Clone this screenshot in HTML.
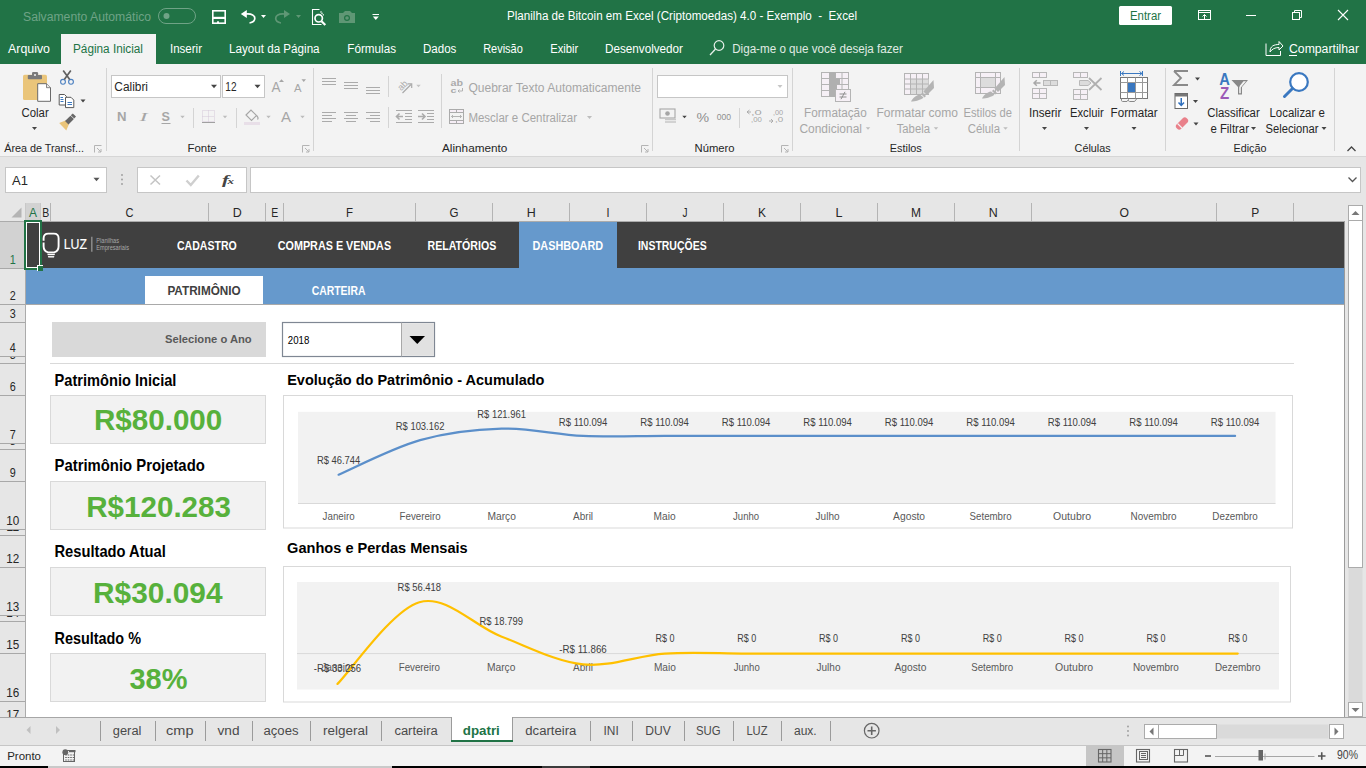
<!DOCTYPE html>
<html><head><meta charset="utf-8"><title>Excel</title>
<style>html,body{margin:0;padding:0;width:1366px;height:768px;overflow:hidden;background:#fff}
svg{display:block;font-family:"Liberation Sans",sans-serif}</style></head>
<body><svg width="1366" height="768" viewBox="0 0 1366 768">
<rect x="0" y="0" width="1366" height="64" fill="#217346" />
<text x="23.0" y="20.9" font-size="12.50" fill="#6fa386" textLength="128.0" lengthAdjust="spacingAndGlyphs" >Salvamento Automático</text>
<rect x="158.5" y="8.5" width="37" height="15" fill="none" stroke="#6fa386" stroke-width="1" rx="7.5"/>
<circle cx="166.5" cy="16" r="3" fill="#6fa386"/>
<rect x="212.8" y="10.8" width="12.4" height="12.4" fill="none" stroke="#fff" stroke-width="1.6" />
<rect x="212" y="16.8" width="14" height="2.2" fill="#fff" />
<rect x="217" y="21.3" width="2" height="2" fill="#fff" />
<path d="M246,14 C252,13.5 254.8,15.5 254.8,18.3 C254.8,21 253,22.5 249.5,23" fill="none" stroke="#fff" stroke-width="1.7" />
<path d="M240.8,14 L246.8,10.1 V17.9 Z" fill="#fff" />
<path d="M261.0,15.0 L266.0,15.0 L263.5,18.0 Z" fill="#fff" />
<path d="M284.5,14 C278.5,13.5 275.7,15.5 275.7,18.3 C275.7,21 277.5,22.5 281,23" fill="none" stroke="#5f9775" stroke-width="1.7" />
<path d="M290,14 L284,10.1 V17.9 Z" fill="#5f9775" />
<path d="M296.0,15.0 L301.0,15.0 L298.5,18.0 Z" fill="#5f9775" />
<path d="M321.5,24.5 H312.5 V9.5 H319.5" fill="none" stroke="#fff" stroke-width="1.1" />
<path d="M320.5,11 L322,12.5 M320.5,12.5 L323.5,14.5 V15.5" fill="none" stroke="#fff" stroke-width="0.9" />
<circle cx="318.7" cy="18.3" r="3.7" fill="none" stroke="#fff" stroke-width="1.7"/>
<line x1="321.5" y1="21.2" x2="325.3" y2="25" stroke="#fff" stroke-width="2.2" />
<path d="M339,13 H343 L345,11 H350 L352,13 H355 V23 H339 Z" fill="#5f9775" />
<circle cx="347" cy="18" r="3" fill="#217346"/><circle cx="347" cy="18" r="1.8" fill="#5f9775"/>
<line x1="372.5" y1="14.5" x2="379" y2="14.5" stroke="#fff" stroke-width="1" />
<path d="M372.8,16.55 L378.8,16.55 L375.8,20.05 Z" fill="#fff" />
<text x="507.0" y="19.6" font-size="12.50" fill="#fff" textLength="350.0" lengthAdjust="spacingAndGlyphs" >Planilha de Bitcoin em Excel (Criptomoedas) 4.0 - Exemplo  -  Excel</text>
<rect x="1119" y="6" width="53" height="19" fill="#fff" rx="1.5"/>
<text x="1130.0" y="19.5" font-size="12.21" fill="#217346" textLength="31.0" lengthAdjust="spacingAndGlyphs" >Entrar</text>
<rect x="1198.5" y="10.5" width="12" height="9" fill="none" stroke="#fff" stroke-width="1" />
<line x1="1198.5" y1="12.5" x2="1210.5" y2="12.5" stroke="#fff" stroke-width="1" />
<path d="M1204.5,19 V14.5 M1202.5,16.5 L1204.5,14.5 L1206.5,16.5" fill="none" stroke="#fff" stroke-width="1" />
<line x1="1246" y1="15.5" x2="1256" y2="15.5" stroke="#fff" stroke-width="1" />
<rect x="1292.5" y="12.5" width="7" height="7" fill="none" stroke="#fff" stroke-width="1" />
<path d="M1294.5,12.5 V10.5 H1301.5 V17.5 H1299.5" fill="none" stroke="#fff" stroke-width="1" />
<path d="M1338,10 L1348,20 M1348,10 L1338,20" fill="none" stroke="#fff" stroke-width="1.1" />
<rect x="61" y="34" width="95" height="30" fill="#f3f3f3" />
<text x="8.0" y="52.9" font-size="12.65" fill="#fff" textLength="42.0" lengthAdjust="spacingAndGlyphs" >Arquivo</text>
<text x="73.0" y="52.9" font-size="12.65" fill="#217346" textLength="70.0" lengthAdjust="spacingAndGlyphs" >Página Inicial</text>
<text x="170.0" y="52.9" font-size="12.65" fill="#fff" textLength="32.0" lengthAdjust="spacingAndGlyphs" >Inserir</text>
<text x="229.0" y="52.9" font-size="12.65" fill="#fff" textLength="90.6" lengthAdjust="spacingAndGlyphs" >Layout da Página</text>
<text x="347.3" y="52.9" font-size="12.65" fill="#fff" textLength="48.7" lengthAdjust="spacingAndGlyphs" >Fórmulas</text>
<text x="423.0" y="52.9" font-size="12.65" fill="#fff" textLength="33.4" lengthAdjust="spacingAndGlyphs" >Dados</text>
<text x="483.2" y="52.9" font-size="12.65" fill="#fff" textLength="39.6" lengthAdjust="spacingAndGlyphs" >Revisão</text>
<text x="550.2" y="52.9" font-size="12.65" fill="#fff" textLength="28.0" lengthAdjust="spacingAndGlyphs" >Exibir</text>
<text x="605.0" y="52.9" font-size="12.65" fill="#fff" textLength="78.0" lengthAdjust="spacingAndGlyphs" >Desenvolvedor</text>
<circle cx="719" cy="45.5" r="4.8" fill="none" stroke="#e6efe9" stroke-width="1.2"/>
<line x1="715.5" y1="49" x2="710" y2="55" stroke="#e6efe9" stroke-width="1.3" />
<text x="732.2" y="52.9" font-size="12.65" fill="#e0ebe4" textLength="170.7" lengthAdjust="spacingAndGlyphs" >Diga-me o que você deseja fazer</text>
<path d="M1266,43.5 V55.5 H1280.5 V51" fill="none" stroke="#fff" stroke-width="1" />
<path d="M1270,52 C1270,46 1274,44.5 1279,44.5 V41.5 L1283,46 L1279,50 V47.5 C1275,47.5 1272,49 1270,52 Z" fill="none" stroke="#fff" stroke-width="1" />
<text x="1289.0" y="52.9" font-size="12.65" fill="#fff" textLength="70.0" lengthAdjust="spacingAndGlyphs" >Compartilhar</text>
<line x1="1289" y1="55.5" x2="1297" y2="55.5" stroke="#fff" stroke-width="1" />
<rect x="0" y="64" width="1366" height="92" fill="#f3f3f3" />
<line x1="0" y1="156.5" x2="1366" y2="156.5" stroke="#d6d6d6" stroke-width="1" />
<text x="4.2" y="152.0" font-size="11.63" fill="#262626" textLength="79.7" lengthAdjust="spacingAndGlyphs" >Área de Transf...</text>
<text x="187.4" y="152.0" font-size="11.63" fill="#262626" textLength="29.3" lengthAdjust="spacingAndGlyphs" >Fonte</text>
<text x="442.0" y="152.0" font-size="11.63" fill="#262626" textLength="65.4" lengthAdjust="spacingAndGlyphs" >Alinhamento</text>
<text x="694.5" y="152.0" font-size="11.63" fill="#262626" textLength="40.1" lengthAdjust="spacingAndGlyphs" >Número</text>
<text x="889.8" y="152.0" font-size="11.63" fill="#262626" textLength="32.0" lengthAdjust="spacingAndGlyphs" >Estilos</text>
<text x="1074.6" y="152.0" font-size="11.63" fill="#262626" textLength="36.0" lengthAdjust="spacingAndGlyphs" >Células</text>
<text x="1233.5" y="152.0" font-size="11.63" fill="#262626" textLength="32.9" lengthAdjust="spacingAndGlyphs" >Edição</text>
<line x1="106.5" y1="68" x2="106.5" y2="151" stroke="#d4d4d4" stroke-width="1" />
<line x1="313.5" y1="68" x2="313.5" y2="151" stroke="#d4d4d4" stroke-width="1" />
<line x1="652.5" y1="68" x2="652.5" y2="151" stroke="#d4d4d4" stroke-width="1" />
<line x1="792.5" y1="68" x2="792.5" y2="151" stroke="#d4d4d4" stroke-width="1" />
<line x1="1019.5" y1="68" x2="1019.5" y2="151" stroke="#d4d4d4" stroke-width="1" />
<line x1="1165.5" y1="68" x2="1165.5" y2="151" stroke="#d4d4d4" stroke-width="1" />
<line x1="1334.5" y1="68" x2="1334.5" y2="151" stroke="#d4d4d4" stroke-width="1" />
<path d="M94.5,152.5 V145.5 H101.5" fill="none" stroke="#b4b4b4" stroke-width="1" />
<path d="M97.0,148.0 L101.0,152.0 M101.0,149.0 V152.0 H98.0" fill="none" stroke="#b4b4b4" stroke-width="1" />
<path d="M302.5,152.5 V145.5 H309.5" fill="none" stroke="#b4b4b4" stroke-width="1" />
<path d="M305.0,148.0 L309.0,152.0 M309.0,149.0 V152.0 H306.0" fill="none" stroke="#b4b4b4" stroke-width="1" />
<path d="M641.5,152.5 V145.5 H648.5" fill="none" stroke="#b4b4b4" stroke-width="1" />
<path d="M644.0,148.0 L648.0,152.0 M648.0,149.0 V152.0 H645.0" fill="none" stroke="#b4b4b4" stroke-width="1" />
<path d="M781.5,152.5 V145.5 H788.5" fill="none" stroke="#b4b4b4" stroke-width="1" />
<path d="M784.0,148.0 L788.0,152.0 M788.0,149.0 V152.0 H785.0" fill="none" stroke="#b4b4b4" stroke-width="1" />
<path d="M1347.5,151 L1351.5,147 L1355.5,151" fill="none" stroke="#444" stroke-width="1.3" />
<rect x="23" y="74.8" width="24" height="25.3" fill="#eac57a" rx="1.6"/>
<rect x="27.8" y="75" width="14.2" height="4.2" fill="#7a7a7a" rx="0.8"/>
<rect x="32" y="72" width="6.1" height="3.5" fill="#7a7a7a" rx="1.2"/>
<circle cx="35" cy="75" r="1" fill="#f3f3f3"/>
<path d="M37.7,83.7 H46.5 L50.5,87.7 V101.3 H37.7 Z" fill="#fff" stroke="#6a6a6a" stroke-width="1" />
<path d="M46.5,83.7 V87.7 H50.5" fill="#e8e8e8" stroke="#6a6a6a" stroke-width="0.8" />
<text x="21.5" y="117.2" font-size="12.50" fill="#262626" textLength="27.2" lengthAdjust="spacingAndGlyphs" >Colar</text>
<path d="M32.0,127.0 L37.0,127.0 L34.5,130.0 Z" fill="#444" />
<circle cx="63" cy="81.8" r="2.4" fill="none" stroke="#4a7fc0" stroke-width="1.1"/>
<circle cx="71" cy="81.8" r="2.4" fill="none" stroke="#4a7fc0" stroke-width="1.1"/>
<path d="M64.3,79.6 L70.8,70.6 M69.7,79.6 L63.2,70.6" fill="none" stroke="#606060" stroke-width="1.7" />
<path d="M59.2,94.5 H64.5 L66.5,96.5 V105 H59.2 Z" fill="#fff" stroke="#5a5a5a" stroke-width="1" />
<path d="M65.5,97.3 H71 L73.8,100.1 V107.6 H65.5 Z" fill="#fff" stroke="#5a5a5a" stroke-width="1" />
<path d="M60.5,97.5 H63 M60.5,99.5 H63.5 M60.5,101.5 H63.5 M67.5,102.5 H72 M67.5,104.5 H72" fill="none" stroke="#3a78c0" stroke-width="1" />
<path d="M80.5,99.5 L85.5,99.5 L83,102.5 Z" fill="#444" />
<path d="M59.2,123 L65.5,120.5 L69,124 L66.3,130.5 Z" fill="#eac57a" />
<path d="M65,121 L70.5,115.7 L73.9,119 L68.5,124.5 Z" fill="#666" />
<path d="M70.8,115.2 L72.8,113.4 L76,116.6 L74.2,118.6 Z" fill="#666" />
<rect x="111.5" y="75.5" width="109" height="22" fill="#fff" stroke="#c6c6c6" stroke-width="1" />
<rect x="222.5" y="75.5" width="42" height="22" fill="#fff" stroke="#c6c6c6" stroke-width="1" />
<text x="114.3" y="90.5" font-size="12.50" fill="#262626" textLength="33.7" lengthAdjust="spacingAndGlyphs" >Calibri</text>
<text x="225.3" y="90.5" font-size="12.50" fill="#262626" textLength="11.2" lengthAdjust="spacingAndGlyphs" >12</text>
<path d="M211.0,84.75 L217.0,84.75 L214,88.25 Z" fill="#444" />
<path d="M254.5,84.75 L260.5,84.75 L257.5,88.25 Z" fill="#444" />
<text x="271.5" y="91.6" font-size="14.53" fill="#a6a6a6" textLength="9.0" lengthAdjust="spacingAndGlyphs" >A</text>
<path d="M279,82 L281.5,79.2 L284,82 Z" fill="#a6a6a6" />
<text x="294.0" y="91.6" font-size="10.76" fill="#a6a6a6" textLength="7.5" lengthAdjust="spacingAndGlyphs" >A</text>
<path d="M301.5,79.2 H306 L303.75,82 Z" fill="#a6a6a6" />
<text x="117.0" y="121.0" font-size="12.50" font-weight="bold" fill="#a6a6a6" textLength="9.5" lengthAdjust="spacingAndGlyphs" >N</text>
<text x="139.5" y="121.0" font-size="12.50" fill="#a6a6a6" textLength="8.0" lengthAdjust="spacingAndGlyphs" font-style="italic" font-family="Liberation Serif">I</text>
<text x="161.6" y="121.0" font-size="12.50" font-weight="bold" fill="#a6a6a6" textLength="8.4" lengthAdjust="spacingAndGlyphs" >S</text>
<line x1="161.5" y1="123.5" x2="170.5" y2="123.5" stroke="#a6a6a6" stroke-width="1" />
<path d="M180.25,115.75 L184.75,115.75 L182.5,118.25 Z" fill="#bdbdbd" />
<line x1="193.5" y1="108" x2="193.5" y2="128" stroke="#d4d4d4" stroke-width="1" />
<rect x="202.5" y="110.5" width="12" height="11" fill="none" stroke="#d4c8d8" stroke-width="1" stroke-dasharray="1,1"/>
<line x1="202.5" y1="116.5" x2="214.5" y2="116.5" stroke="#d4c8d8" stroke-width="1" stroke-dasharray="1,1"/>
<line x1="208.5" y1="110.5" x2="208.5" y2="121.5" stroke="#d4c8d8" stroke-width="1" stroke-dasharray="1,1"/>
<line x1="202" y1="122.5" x2="215" y2="122.5" stroke="#a0a0a0" stroke-width="1" />
<path d="M222.75,115.75 L227.25,115.75 L225,118.25 Z" fill="#bdbdbd" />
<line x1="236.5" y1="108" x2="236.5" y2="128" stroke="#d4d4d4" stroke-width="1" />
<path d="M246,115 L251,110 L256.5,115.5 L251.5,120.5 Z" fill="none" stroke="#a6a6a6" stroke-width="1.1" />
<path d="M256.5,115.5 C258,117 258.5,118.5 257.5,119.5" fill="none" stroke="#a6a6a6" stroke-width="1.2" />
<rect x="244" y="122" width="16" height="3" fill="#e8dfe8" />
<path d="M266.25,115.75 L270.75,115.75 L268.5,118.25 Z" fill="#bdbdbd" />
<text x="281.0" y="122.0" font-size="14.24" fill="#a6a6a6" textLength="10.0" lengthAdjust="spacingAndGlyphs" >A</text>
<path d="M300.25,115.75 L304.75,115.75 L302.5,118.25 Z" fill="#bdbdbd" />
<line x1="322" y1="78.5" x2="336" y2="78.5" stroke="#ababab" stroke-width="1" />
<line x1="322" y1="81.5" x2="336" y2="81.5" stroke="#ababab" stroke-width="1" />
<line x1="322" y1="84.5" x2="336" y2="84.5" stroke="#ababab" stroke-width="1" />
<line x1="344" y1="82.5" x2="358" y2="82.5" stroke="#ababab" stroke-width="1" />
<line x1="344" y1="85.5" x2="358" y2="85.5" stroke="#ababab" stroke-width="1" />
<line x1="344" y1="88.5" x2="358" y2="88.5" stroke="#ababab" stroke-width="1" />
<line x1="366" y1="87.5" x2="380" y2="87.5" stroke="#ababab" stroke-width="1" />
<line x1="366" y1="90.5" x2="380" y2="90.5" stroke="#ababab" stroke-width="1" />
<line x1="366" y1="93.5" x2="380" y2="93.5" stroke="#ababab" stroke-width="1" />
<line x1="322" y1="112.5" x2="336" y2="112.5" stroke="#ababab" stroke-width="1" />
<line x1="344" y1="112.5" x2="358" y2="112.5" stroke="#ababab" stroke-width="1" />
<line x1="366" y1="112.5" x2="380" y2="112.5" stroke="#ababab" stroke-width="1" />
<line x1="322" y1="115.5" x2="332" y2="115.5" stroke="#ababab" stroke-width="1" />
<line x1="346" y1="115.5" x2="356" y2="115.5" stroke="#ababab" stroke-width="1" />
<line x1="370" y1="115.5" x2="380" y2="115.5" stroke="#ababab" stroke-width="1" />
<line x1="322" y1="118.5" x2="336" y2="118.5" stroke="#ababab" stroke-width="1" />
<line x1="344" y1="118.5" x2="358" y2="118.5" stroke="#ababab" stroke-width="1" />
<line x1="366" y1="118.5" x2="380" y2="118.5" stroke="#ababab" stroke-width="1" />
<line x1="322" y1="121.5" x2="332" y2="121.5" stroke="#ababab" stroke-width="1" />
<line x1="346" y1="121.5" x2="356" y2="121.5" stroke="#ababab" stroke-width="1" />
<line x1="370" y1="121.5" x2="380" y2="121.5" stroke="#ababab" stroke-width="1" />
<line x1="388.5" y1="76" x2="388.5" y2="97" stroke="#d4d4d4" stroke-width="1" />
<line x1="388.5" y1="107" x2="388.5" y2="128" stroke="#d4d4d4" stroke-width="1" />
<text x="397.0" y="89.0" font-size="9.45" fill="#ababab" textLength="10.0" lengthAdjust="spacingAndGlyphs" transform="rotate(-45 402 85)">ab</text>
<line x1="402.5" y1="93" x2="411" y2="84.5" stroke="#ababab" stroke-width="1.2" />
<path d="M407.5,83.8 H411.7 V88" fill="none" stroke="#ababab" stroke-width="1.2" />
<path d="M416.25,84.75 L420.75,84.75 L418.5,87.25 Z" fill="#c4c4c4" />
<line x1="396" y1="110.5" x2="412" y2="110.5" stroke="#ababab" stroke-width="1" />
<line x1="396" y1="122.5" x2="412" y2="122.5" stroke="#ababab" stroke-width="1" />
<line x1="405" y1="113.5" x2="412" y2="113.5" stroke="#ababab" stroke-width="1" />
<line x1="405" y1="116.5" x2="412" y2="116.5" stroke="#ababab" stroke-width="1" />
<line x1="405" y1="119.5" x2="412" y2="119.5" stroke="#ababab" stroke-width="1" />
<line x1="418" y1="110.5" x2="434" y2="110.5" stroke="#ababab" stroke-width="1" />
<line x1="418" y1="122.5" x2="434" y2="122.5" stroke="#ababab" stroke-width="1" />
<line x1="427" y1="113.5" x2="434" y2="113.5" stroke="#ababab" stroke-width="1" />
<line x1="427" y1="116.5" x2="434" y2="116.5" stroke="#ababab" stroke-width="1" />
<line x1="427" y1="119.5" x2="434" y2="119.5" stroke="#ababab" stroke-width="1" />
<path d="M396.5,116.5 H403 M399.5,113.5 L396.5,116.5 L399.5,119.5" fill="none" stroke="#ababab" stroke-width="1.6" />
<path d="M418,116.5 H425 M422,113.5 L425,116.5 L422,119.5" fill="none" stroke="#ababab" stroke-width="1.6" />
<line x1="441.5" y1="74" x2="441.5" y2="128" stroke="#d4d4d4" stroke-width="1" />
<text x="450.5" y="85.6" font-size="9.59" font-weight="bold" fill="#ababab" textLength="12.5" lengthAdjust="spacingAndGlyphs" >ab</text>
<text x="450.5" y="92.6" font-size="7.85" font-weight="bold" fill="#ababab" textLength="6.0" lengthAdjust="spacingAndGlyphs" >c</text>
<path d="M462.5,88 V91 H458 M459.5,89.5 L458,91 L459.5,92.5" fill="none" stroke="#ababab" stroke-width="0.9" />
<text x="468.4" y="91.5" font-size="12.50" fill="#a6a6a6" textLength="172.6" lengthAdjust="spacingAndGlyphs" >Quebrar Texto Automaticamente</text>
<rect x="449.5" y="109.5" width="14" height="14" fill="#f6eef6" stroke="#ababab" stroke-width="1" />
<line x1="449.5" y1="112.5" x2="463.5" y2="112.5" stroke="#ababab" stroke-width="1" />
<line x1="449.5" y1="120.5" x2="463.5" y2="120.5" stroke="#ababab" stroke-width="1" />
<line x1="456.5" y1="109.5" x2="456.5" y2="112.5" stroke="#ababab" stroke-width="1" />
<line x1="456.5" y1="120.5" x2="456.5" y2="123.5" stroke="#ababab" stroke-width="1" />
<rect x="450" y="113" width="13" height="7" fill="#f3f3f3" />
<path d="M451.5,116.5 H461.5 M453,115 L451.5,116.5 L453,118 M460,115 L461.5,116.5 L460,118" fill="none" stroke="#ababab" stroke-width="0.9" />
<text x="468.4" y="122.0" font-size="12.50" fill="#a6a6a6" textLength="108.6" lengthAdjust="spacingAndGlyphs" >Mesclar e Centralizar</text>
<path d="M587.0,116.0 L592.0,116.0 L589.5,119.0 Z" fill="#bdbdbd" />
<rect x="657.5" y="75.5" width="130" height="22" fill="#fff" stroke="#c6c6c6" stroke-width="1" />
<path d="M777.5,85.0 L782.5,85.0 L780,88.0 Z" fill="#c6c6c6" />
<rect x="660" y="109" width="15" height="9" fill="none" stroke="#a6a6a6" stroke-width="1.1" />
<circle cx="667.5" cy="113.5" r="2.3" fill="#a6a6a6"/>
<path d="M665,119.5 H676 M665,122 H676" fill="none" stroke="#c8c8c8" stroke-width="1.5" />
<path d="M682.25,115.75 L686.75,115.75 L684.5,118.25 Z" fill="#444" />
<text x="696.4" y="121.5" font-size="12.50" fill="#8f8f8f" textLength="12.6" lengthAdjust="spacingAndGlyphs" >%</text>
<text x="716.7" y="120.0" font-size="8.43" fill="#8f8f8f" textLength="14.3" lengthAdjust="spacingAndGlyphs" >000</text>
<line x1="739.5" y1="108" x2="739.5" y2="128" stroke="#d4d4d4" stroke-width="1" />
<text x="751.0" y="114.5" font-size="7.27" fill="#a6a6a6" textLength="10.8" lengthAdjust="spacingAndGlyphs" >,0</text>
<text x="751.0" y="122.0" font-size="7.27" fill="#a6a6a6" textLength="10.8" lengthAdjust="spacingAndGlyphs" >,00</text>
<path d="M747,112 L749.5,110 M747,112 L749.5,114 M747,112 H751" fill="none" stroke="#a6a6a6" stroke-width="0.9" />
<text x="773.0" y="114.5" font-size="7.27" fill="#a6a6a6" textLength="10.2" lengthAdjust="spacingAndGlyphs" >,00</text>
<text x="775.0" y="122.0" font-size="7.27" fill="#a6a6a6" textLength="8.2" lengthAdjust="spacingAndGlyphs" >,0</text>
<path d="M769,121 H773 M771,119 L773,121 L771,123" fill="none" stroke="#a6a6a6" stroke-width="0.9" />
<rect x="821.5" y="72.5" width="27" height="24" fill="#f6f0f6" stroke="#b4b4b4" stroke-width="1" />
<line x1="829.5" y1="72.5" x2="829.5" y2="96.5" stroke="#b4b4b4" stroke-width="1" />
<line x1="835.5" y1="72.5" x2="835.5" y2="96.5" stroke="#b4b4b4" stroke-width="1" />
<line x1="842.0" y1="72.5" x2="842.0" y2="96.5" stroke="#b4b4b4" stroke-width="1" />
<line x1="821.5" y1="78.5" x2="848.5" y2="78.5" stroke="#b4b4b4" stroke-width="1" />
<line x1="821.5" y1="84.5" x2="848.5" y2="84.5" stroke="#b4b4b4" stroke-width="1" />
<line x1="821.5" y1="90.5" x2="848.5" y2="90.5" stroke="#b4b4b4" stroke-width="1" />
<rect x="829" y="72" width="6.5" height="25" fill="#b0b0b0" />
<rect x="829" y="78.5" width="11" height="6" fill="#b0b0b0" />
<rect x="829" y="84.5" width="8" height="6" fill="#b0b0b0" />
<rect x="835.5" y="89.5" width="15" height="12" fill="#f6f0f6" stroke="#b4b4b4" stroke-width="1" />
<path d="M839.5,94 H846.5 M839.5,97 H846.5 M845,91.8 L841,99.2" fill="none" stroke="#8f8f8f" stroke-width="1" />
<text x="804.0" y="117.0" font-size="12.50" fill="#a6a6a6" textLength="62.7" lengthAdjust="spacingAndGlyphs" >Formatação</text>
<text x="799.4" y="133.0" font-size="12.50" fill="#a6a6a6" textLength="62.6" lengthAdjust="spacingAndGlyphs" >Condicional</text>
<path d="M865.75,127.25 L870.25,127.25 L868,129.75 Z" fill="#bdbdbd" />
<rect x="904.5" y="73.5" width="24" height="21" fill="#f6f0f6" stroke="#b4b4b4" stroke-width="1" />
<rect x="910.5" y="79" width="18" height="15" fill="#dcdcdc" />
<line x1="910.5" y1="73.5" x2="910.5" y2="94.5" stroke="#b4b4b4" stroke-width="1" />
<line x1="916.5" y1="73.5" x2="916.5" y2="94.5" stroke="#b4b4b4" stroke-width="1" />
<line x1="922.5" y1="73.5" x2="922.5" y2="94.5" stroke="#b4b4b4" stroke-width="1" />
<line x1="904.5" y1="79.0" x2="928.5" y2="79.0" stroke="#b4b4b4" stroke-width="1" />
<line x1="904.5" y1="84.0" x2="928.5" y2="84.0" stroke="#b4b4b4" stroke-width="1" />
<line x1="904.5" y1="89.0" x2="928.5" y2="89.0" stroke="#b4b4b4" stroke-width="1" />
<path d="M933.5,80 L934,88 L927,95 L923.5,91.5 Z" fill="#b4b4b4" />
<path d="M922.5,92.5 L926,96 L924.5,97.5 L921,94 Z" fill="#b4b4b4" />
<path d="M920,94.5 C916,95 912,99 911,101.5 C915,101.5 921,100 923.5,97.5 Z" fill="#b4b4b4" />
<text x="876.4" y="117.0" font-size="12.50" fill="#a6a6a6" textLength="81.6" lengthAdjust="spacingAndGlyphs" >Formatar como</text>
<text x="896.7" y="133.0" font-size="12.50" fill="#a6a6a6" textLength="33.3" lengthAdjust="spacingAndGlyphs" >Tabela</text>
<path d="M933.75,127.25 L938.25,127.25 L936,129.75 Z" fill="#bdbdbd" />
<rect x="975.5" y="72.5" width="25" height="21" fill="#f6f0f6" stroke="#b4b4b4" stroke-width="1" />
<rect x="980.5" y="77.5" width="14.5" height="10" fill="#dcdcdc" />
<line x1="980.5" y1="72.5" x2="980.5" y2="93.5" stroke="#b4b4b4" stroke-width="1" />
<line x1="995.5" y1="72.5" x2="995.5" y2="93.5" stroke="#b4b4b4" stroke-width="1" />
<line x1="975.5" y1="77.5" x2="1000.5" y2="77.5" stroke="#b4b4b4" stroke-width="1" />
<line x1="975.5" y1="87.5" x2="1000.5" y2="87.5" stroke="#b4b4b4" stroke-width="1" />
<path d="M1004.5,77 L1005,85 L998,92 L994.5,88.5 Z" fill="#b4b4b4" />
<path d="M993.5,89.5 L997,93 L995.5,94.5 L992,91 Z" fill="#b4b4b4" />
<path d="M991,91.5 C987,92 983,96 982,98.5 C986,98.5 992,97 994.5,94.5 Z" fill="#b4b4b4" />
<text x="963.5" y="117.0" font-size="12.50" fill="#a6a6a6" textLength="48.5" lengthAdjust="spacingAndGlyphs" >Estilos de</text>
<text x="967.7" y="133.0" font-size="12.50" fill="#a6a6a6" textLength="32.3" lengthAdjust="spacingAndGlyphs" >Célula</text>
<path d="M1003.25,127.25 L1007.75,127.25 L1005.5,129.75 Z" fill="#bdbdbd" />
<rect x="1032.5" y="72.5" width="14" height="5" fill="#f6f0f6" stroke="#b8b8b8" stroke-width="1" />
<line x1="1039.5" y1="72.5" x2="1039.5" y2="77.5" stroke="#b8b8b8" stroke-width="1" />
<rect x="1043.5" y="80.5" width="14" height="5" fill="#dcdcdc" stroke="#b8b8b8" stroke-width="1" />
<line x1="1050.5" y1="80.5" x2="1050.5" y2="85.5" stroke="#b8b8b8" stroke-width="1" />
<path d="M1034,83 H1040.5 M1036.8,80.2 L1034,83 L1036.8,85.8" fill="none" stroke="#a8a8a8" stroke-width="1.5" />
<rect x="1032.5" y="88.5" width="14" height="10" fill="#f6f0f6" stroke="#b8b8b8" stroke-width="1" />
<line x1="1039.5" y1="88.5" x2="1039.5" y2="98.5" stroke="#b8b8b8" stroke-width="1" />
<line x1="1032.5" y1="93.5" x2="1046.5" y2="93.5" stroke="#b8b8b8" stroke-width="1" />
<text x="1029.0" y="116.7" font-size="12.50" fill="#262626" textLength="32.3" lengthAdjust="spacingAndGlyphs" >Inserir</text>
<path d="M1042.0,127.0 L1047.0,127.0 L1044.5,130.0 Z" fill="#444" />
<rect x="1073.5" y="72.5" width="14" height="5" fill="#f6f0f6" stroke="#b8b8b8" stroke-width="1" />
<line x1="1080.5" y1="72.5" x2="1080.5" y2="77.5" stroke="#b8b8b8" stroke-width="1" />
<path d="M1079.5,80.5 H1088 L1091,83 L1088,85.5 H1079.5 Z" fill="#dcdcdc" stroke="#b8b8b8" stroke-width="1" />
<path d="M1089,78 L1101.5,90 M1101.5,78 L1089,90" fill="none" stroke="#b0b0b0" stroke-width="1.8" />
<rect x="1073.5" y="89.5" width="14" height="10" fill="#f6f0f6" stroke="#b8b8b8" stroke-width="1" />
<line x1="1080.5" y1="89.5" x2="1080.5" y2="99.5" stroke="#b8b8b8" stroke-width="1" />
<line x1="1073.5" y1="94.5" x2="1087.5" y2="94.5" stroke="#b8b8b8" stroke-width="1" />
<text x="1070.0" y="116.7" font-size="12.50" fill="#262626" textLength="33.7" lengthAdjust="spacingAndGlyphs" >Excluir</text>
<path d="M1084.0,127.0 L1089.0,127.0 L1086.5,130.0 Z" fill="#444" />
<path d="M1121.5,73.5 H1142 M1124,71.5 L1121.5,73.5 L1124,75.5 M1139.5,71.5 L1142,73.5 L1139.5,75.5" fill="none" stroke="#3a78c0" stroke-width="1" />
<line x1="1120.5" y1="71" x2="1120.5" y2="76" stroke="#3a78c0" stroke-width="1" />
<line x1="1142.5" y1="71" x2="1142.5" y2="76" stroke="#3a78c0" stroke-width="1" />
<rect x="1120.5" y="77.5" width="27" height="21" fill="#fff" stroke="#777" stroke-width="1" />
<line x1="1127.5" y1="77.5" x2="1127.5" y2="98.5" stroke="#999" stroke-width="1" />
<line x1="1135.5" y1="77.5" x2="1135.5" y2="98.5" stroke="#999" stroke-width="1" />
<line x1="1142.5" y1="77.5" x2="1142.5" y2="98.5" stroke="#999" stroke-width="1" />
<line x1="1120.5" y1="82.5" x2="1147.5" y2="82.5" stroke="#999" stroke-width="1" />
<line x1="1120.5" y1="92.5" x2="1147.5" y2="92.5" stroke="#999" stroke-width="1" />
<rect x="1128" y="83" width="7" height="9" fill="#3a78c0" />
<path d="M1121.5,98.5 V100.5 C1121.5,101.5 1122.5,101.5 1123,101.5 H1127 L1128.5,99.5 M1128.5,99.5 V100.5 C1128.5,101.5 1129.5,101.5 1130,101.5 H1134.5 L1137,98.5" fill="none" stroke="#888" stroke-width="1" />
<text x="1110.6" y="116.7" font-size="12.50" fill="#262626" textLength="47.1" lengthAdjust="spacingAndGlyphs" >Formatar</text>
<path d="M1131.5,127.0 L1136.5,127.0 L1134,130.0 Z" fill="#444" />
<path d="M1174,71 H1188 M1174,71 L1181,78 L1174,85 H1188" fill="none" stroke="#8a8a8a" stroke-width="1.8" />
<path d="M1195.0,77.5 L1200.0,77.5 L1197.5,80.5 Z" fill="#444" />
<rect x="1175" y="93.5" width="12.5" height="15" fill="#fff" stroke="#666" stroke-width="1" />
<rect x="1175" y="93.5" width="12.5" height="3" fill="#777" />
<path d="M1181.25,98 V105 M1178.5,102.5 L1181.25,105.5 L1184,102.5" fill="none" stroke="#2e6fbd" stroke-width="1.5" />
<path d="M1193.0,100.0 L1198.0,100.0 L1195.5,103.0 Z" fill="#444" />
<path d="M1176.5,124.5 L1183,118 C1184,117 1185.5,117 1186.5,118 L1187.5,119 C1188.5,120 1188.5,121.5 1187.5,122.5 L1181,129 C1180,130 1178.5,130 1177.5,129 L1176.5,128 C1175.5,127 1175.5,125.5 1176.5,124.5 Z" fill="#e9808a" />
<path d="M1177.5,123.5 L1182,128" fill="none" stroke="#f3f3f3" stroke-width="1.1" />
<path d="M1193.5,122.5 L1198.5,122.5 L1196,125.5 Z" fill="#444" />
<text x="1219.2" y="84.8" font-size="16.28" font-weight="bold" fill="#3a78c0" textLength="10.6" lengthAdjust="spacingAndGlyphs" >A</text>
<text x="1220.0" y="98.8" font-size="16.28" font-weight="bold" fill="#9b59b6" textLength="9.2" lengthAdjust="spacingAndGlyphs" >Z</text>
<path d="M1231.5,80 H1248 L1242,87 V94.5 H1238 V87 Z" fill="#888" />
<path d="M1239.2,87.5 V93.3 H1240.8 V87.5 L1246,81.3 H1243.5 L1240,85.5 Z" fill="#f3f3f3" />
<text x="1207.3" y="116.7" font-size="12.50" fill="#262626" textLength="52.4" lengthAdjust="spacingAndGlyphs" >Classificar</text>
<text x="1210.4" y="132.6" font-size="12.50" fill="#262626" textLength="38.6" lengthAdjust="spacingAndGlyphs" >e Filtrar</text>
<path d="M1251.0,127.0 L1256.0,127.0 L1253.5,130.0 Z" fill="#444" />
<circle cx="1299" cy="82" r="8.8" fill="#fff" stroke="#3a78c0" stroke-width="2.2"/>
<line x1="1292.5" y1="88.5" x2="1284.5" y2="96.5" stroke="#3a78c0" stroke-width="3" stroke-linecap="round"/>
<text x="1269.5" y="116.7" font-size="12.50" fill="#262626" textLength="55.3" lengthAdjust="spacingAndGlyphs" >Localizar e</text>
<text x="1265.6" y="132.6" font-size="12.50" fill="#262626" textLength="52.9" lengthAdjust="spacingAndGlyphs" >Selecionar</text>
<path d="M1321.5,127.0 L1326.5,127.0 L1324,130.0 Z" fill="#444" />
<rect x="0" y="157" width="1366" height="64" fill="#e6e6e6" />
<rect x="5.5" y="167.5" width="101" height="25" fill="#fff" stroke="#c6c6c6" stroke-width="1" />
<text x="12.0" y="184.9" font-size="12.79" fill="#262626" textLength="15.9" lengthAdjust="spacingAndGlyphs" >A1</text>
<path d="M93.5,177.75 L99.5,177.75 L96.5,181.25 Z" fill="#555" />
<circle cx="122" cy="175" r="0.9" fill="#9a9a9a"/>
<circle cx="122" cy="179.5" r="0.9" fill="#9a9a9a"/>
<circle cx="122" cy="184" r="0.9" fill="#9a9a9a"/>
<rect x="137.5" y="167.5" width="109" height="25" fill="#fff" stroke="#c6c6c6" stroke-width="1" />
<path d="M150.5,175.5 L160,184.5 M160,175.5 L150.5,184.5" fill="none" stroke="#c4c4c4" stroke-width="1.5" />
<path d="M186.5,180.5 L190.8,185 L198.8,175.5" fill="none" stroke="#cfcfcf" stroke-width="2.4" />
<text x="222.0" y="184.0" font-size="13.37" font-weight="bold" fill="#444" textLength="7.0" lengthAdjust="spacingAndGlyphs" font-style="italic" font-family="Liberation Serif">f</text>
<text x="227.5" y="183.5" font-size="7.99" font-weight="bold" fill="#444" textLength="6.5" lengthAdjust="spacingAndGlyphs" font-style="italic" font-family="Liberation Serif">x</text>
<rect x="250.5" y="167.5" width="1110" height="25" fill="#fff" stroke="#c6c6c6" stroke-width="1" />
<path d="M1348.5,177.5 L1352.5,181.5 L1356.5,177.5" fill="none" stroke="#555" stroke-width="1.3" />
<rect x="0" y="203" width="1345" height="19" fill="#e6e6e6" />
<rect x="25" y="203" width="16" height="18" fill="#d2d2d2" />
<line x1="25.5" y1="203" x2="25.5" y2="221" stroke="#c8c8c8" stroke-width="1" />
<line x1="40.5" y1="203" x2="40.5" y2="221" stroke="#c8c8c8" stroke-width="1" />
<path d="M11.5,217.5 H21.5 V207.5 Z" fill="#b4b4b4" />
<line x1="50.5" y1="203" x2="50.5" y2="221" stroke="#b4b4b4" stroke-width="1" />
<line x1="208.5" y1="203" x2="208.5" y2="221" stroke="#b4b4b4" stroke-width="1" />
<line x1="265.5" y1="203" x2="265.5" y2="221" stroke="#b4b4b4" stroke-width="1" />
<line x1="283.5" y1="203" x2="283.5" y2="221" stroke="#b4b4b4" stroke-width="1" />
<line x1="415.5" y1="203" x2="415.5" y2="221" stroke="#b4b4b4" stroke-width="1" />
<line x1="492.5" y1="203" x2="492.5" y2="221" stroke="#b4b4b4" stroke-width="1" />
<line x1="569.5" y1="203" x2="569.5" y2="221" stroke="#b4b4b4" stroke-width="1" />
<line x1="646.5" y1="203" x2="646.5" y2="221" stroke="#b4b4b4" stroke-width="1" />
<line x1="723.5" y1="203" x2="723.5" y2="221" stroke="#b4b4b4" stroke-width="1" />
<line x1="800.5" y1="203" x2="800.5" y2="221" stroke="#b4b4b4" stroke-width="1" />
<line x1="877.5" y1="203" x2="877.5" y2="221" stroke="#b4b4b4" stroke-width="1" />
<line x1="954.5" y1="203" x2="954.5" y2="221" stroke="#b4b4b4" stroke-width="1" />
<line x1="1031.5" y1="203" x2="1031.5" y2="221" stroke="#b4b4b4" stroke-width="1" />
<line x1="1216.5" y1="203" x2="1216.5" y2="221" stroke="#b4b4b4" stroke-width="1" />
<line x1="1293.5" y1="203" x2="1293.5" y2="221" stroke="#b4b4b4" stroke-width="1" />
<text x="29.0" y="216.7" font-size="12.79" fill="#217346" textLength="8.0" lengthAdjust="spacingAndGlyphs" >A</text>
<text x="42.3" y="216.7" font-size="12.79" fill="#262626" textLength="7.0" lengthAdjust="spacingAndGlyphs" >B</text>
<text x="125.6" y="216.7" font-size="12.79" fill="#262626" textLength="8.0" lengthAdjust="spacingAndGlyphs" >C</text>
<text x="232.8" y="216.7" font-size="12.79" fill="#262626" textLength="9.0" lengthAdjust="spacingAndGlyphs" >D</text>
<text x="271.2" y="216.7" font-size="12.79" fill="#262626" textLength="7.0" lengthAdjust="spacingAndGlyphs" >E</text>
<text x="345.9" y="216.7" font-size="12.79" fill="#262626" textLength="7.0" lengthAdjust="spacingAndGlyphs" >F</text>
<text x="449.5" y="216.7" font-size="12.79" fill="#262626" textLength="9.0" lengthAdjust="spacingAndGlyphs" >G</text>
<text x="526.8" y="216.7" font-size="12.79" fill="#262626" textLength="9.0" lengthAdjust="spacingAndGlyphs" >H</text>
<text x="606.6" y="216.7" font-size="12.79" fill="#262626" textLength="3.0" lengthAdjust="spacingAndGlyphs" >I</text>
<text x="682.5" y="216.7" font-size="12.79" fill="#262626" textLength="5.0" lengthAdjust="spacingAndGlyphs" >J</text>
<text x="758.0" y="216.7" font-size="12.79" fill="#262626" textLength="8.0" lengthAdjust="spacingAndGlyphs" >K</text>
<text x="835.5" y="216.7" font-size="12.79" fill="#262626" textLength="7.0" lengthAdjust="spacingAndGlyphs" >L</text>
<text x="911.1" y="216.7" font-size="12.79" fill="#262626" textLength="10.0" lengthAdjust="spacingAndGlyphs" >M</text>
<text x="988.7" y="216.7" font-size="12.79" fill="#262626" textLength="9.0" lengthAdjust="spacingAndGlyphs" >N</text>
<text x="1119.5" y="216.7" font-size="12.79" fill="#262626" textLength="9.5" lengthAdjust="spacingAndGlyphs" >O</text>
<text x="1251.2" y="216.7" font-size="12.79" fill="#262626" textLength="8.0" lengthAdjust="spacingAndGlyphs" >P</text>
<line x1="0" y1="221.5" x2="1345" y2="221.5" stroke="#ababab" stroke-width="1" />
<rect x="0" y="222" width="25" height="495" fill="#e6e6e6" />
<rect x="0" y="222" width="25" height="46" fill="#d2d2d2" />
<defs><clipPath id="rh"><rect x="0" y="222" width="25" height="495"/></clipPath></defs>
<g clip-path="url(#rh)">
<clipPath id="r1"><rect x="0" y="222" width="25" height="46"/></clipPath>
<text x="9.7" y="263.8" font-size="12.79" fill="#217346" textLength="6.0" lengthAdjust="spacingAndGlyphs" clip-path="url(#r1)">1</text>
<line x1="0" y1="268.5" x2="25" y2="268.5" stroke="#a8a8a8" stroke-width="1" />
<clipPath id="r2"><rect x="0" y="269" width="25" height="35"/></clipPath>
<text x="9.7" y="299.8" font-size="12.79" fill="#262626" textLength="6.0" lengthAdjust="spacingAndGlyphs" clip-path="url(#r2)">2</text>
<line x1="0" y1="304.5" x2="25" y2="304.5" stroke="#a8a8a8" stroke-width="1" />
<clipPath id="r3"><rect x="0" y="305" width="25" height="17"/></clipPath>
<text x="9.7" y="317.8" font-size="12.79" fill="#262626" textLength="6.0" lengthAdjust="spacingAndGlyphs" clip-path="url(#r3)">3</text>
<line x1="0" y1="322.5" x2="25" y2="322.5" stroke="#a8a8a8" stroke-width="1" />
<clipPath id="r4"><rect x="0" y="323" width="25" height="33"/></clipPath>
<text x="9.7" y="351.8" font-size="12.79" fill="#262626" textLength="6.0" lengthAdjust="spacingAndGlyphs" clip-path="url(#r4)">4</text>
<line x1="0" y1="356.5" x2="25" y2="356.5" stroke="#a8a8a8" stroke-width="1" />
<clipPath id="r5"><rect x="0" y="357" width="25" height="6"/></clipPath>
<text x="9.7" y="358.8" font-size="12.79" fill="#262626" textLength="6.0" lengthAdjust="spacingAndGlyphs" clip-path="url(#r5)">5</text>
<line x1="0" y1="363.5" x2="25" y2="363.5" stroke="#a8a8a8" stroke-width="1" />
<clipPath id="r6"><rect x="0" y="364" width="25" height="31"/></clipPath>
<text x="9.7" y="390.8" font-size="12.79" fill="#262626" textLength="6.0" lengthAdjust="spacingAndGlyphs" clip-path="url(#r6)">6</text>
<line x1="0" y1="395.5" x2="25" y2="395.5" stroke="#a8a8a8" stroke-width="1" />
<clipPath id="r7"><rect x="0" y="396" width="25" height="47"/></clipPath>
<text x="9.7" y="438.8" font-size="12.79" fill="#262626" textLength="6.0" lengthAdjust="spacingAndGlyphs" clip-path="url(#r7)">7</text>
<line x1="0" y1="443.5" x2="25" y2="443.5" stroke="#a8a8a8" stroke-width="1" />
<clipPath id="r8"><rect x="0" y="444" width="25" height="5"/></clipPath>
<text x="9.7" y="444.8" font-size="12.79" fill="#262626" textLength="6.0" lengthAdjust="spacingAndGlyphs" clip-path="url(#r8)">8</text>
<line x1="0" y1="449.5" x2="25" y2="449.5" stroke="#a8a8a8" stroke-width="1" />
<clipPath id="r9"><rect x="0" y="450" width="25" height="31"/></clipPath>
<text x="9.7" y="476.8" font-size="12.79" fill="#262626" textLength="6.0" lengthAdjust="spacingAndGlyphs" clip-path="url(#r9)">9</text>
<line x1="0" y1="481.5" x2="25" y2="481.5" stroke="#a8a8a8" stroke-width="1" />
<clipPath id="r10"><rect x="0" y="482" width="25" height="47"/></clipPath>
<text x="6.2" y="524.8" font-size="12.79" fill="#262626" textLength="13.0" lengthAdjust="spacingAndGlyphs" clip-path="url(#r10)">10</text>
<line x1="0" y1="529.5" x2="25" y2="529.5" stroke="#a8a8a8" stroke-width="1" />
<clipPath id="r11"><rect x="0" y="530" width="25" height="5"/></clipPath>
<text x="6.2" y="530.8" font-size="12.79" fill="#262626" textLength="13.0" lengthAdjust="spacingAndGlyphs" clip-path="url(#r11)">11</text>
<line x1="0" y1="535.5" x2="25" y2="535.5" stroke="#a8a8a8" stroke-width="1" />
<clipPath id="r12"><rect x="0" y="536" width="25" height="31"/></clipPath>
<text x="6.2" y="562.8" font-size="12.79" fill="#262626" textLength="13.0" lengthAdjust="spacingAndGlyphs" clip-path="url(#r12)">12</text>
<line x1="0" y1="567.5" x2="25" y2="567.5" stroke="#a8a8a8" stroke-width="1" />
<clipPath id="r13"><rect x="0" y="568" width="25" height="47"/></clipPath>
<text x="6.2" y="610.8" font-size="12.79" fill="#262626" textLength="13.0" lengthAdjust="spacingAndGlyphs" clip-path="url(#r13)">13</text>
<line x1="0" y1="615.5" x2="25" y2="615.5" stroke="#a8a8a8" stroke-width="1" />
<clipPath id="r14"><rect x="0" y="616" width="25" height="5"/></clipPath>
<text x="6.2" y="616.8" font-size="12.79" fill="#262626" textLength="13.0" lengthAdjust="spacingAndGlyphs" clip-path="url(#r14)">14</text>
<line x1="0" y1="621.5" x2="25" y2="621.5" stroke="#a8a8a8" stroke-width="1" />
<clipPath id="r15"><rect x="0" y="622" width="25" height="31"/></clipPath>
<text x="6.2" y="648.8" font-size="12.79" fill="#262626" textLength="13.0" lengthAdjust="spacingAndGlyphs" clip-path="url(#r15)">15</text>
<line x1="0" y1="653.5" x2="25" y2="653.5" stroke="#a8a8a8" stroke-width="1" />
<clipPath id="r16"><rect x="0" y="654" width="25" height="47"/></clipPath>
<text x="6.2" y="696.8" font-size="12.79" fill="#262626" textLength="13.0" lengthAdjust="spacingAndGlyphs" clip-path="url(#r16)">16</text>
<line x1="0" y1="701.5" x2="25" y2="701.5" stroke="#a8a8a8" stroke-width="1" />
<clipPath id="r17"><rect x="0" y="702" width="25" height="38"/></clipPath>
<text x="6.2" y="718.5" font-size="12.79" fill="#262626" textLength="13.0" lengthAdjust="spacingAndGlyphs" clip-path="url(#r17)">17</text>
<line x1="0" y1="740.5" x2="25" y2="740.5" stroke="#a8a8a8" stroke-width="1" />
</g>
<line x1="25.5" y1="222" x2="25.5" y2="717" stroke="#ababab" stroke-width="1" />
<rect x="26" y="222" width="1318" height="495" fill="#fff" />
<rect x="26" y="222" width="1318" height="46" fill="#404040" />
<rect x="519" y="222" width="98" height="46" fill="#6699cc" />
<rect x="26" y="268" width="1318" height="36" fill="#6699cc" />
<rect x="145" y="276" width="118" height="28" fill="#fff" />
<line x1="26" y1="304.5" x2="1344" y2="304.5" stroke="#a9a9a9" stroke-width="1" />
<path d="M43.6,240.8 V238.3 C43.6,235.3 45.3,233.6 48.3,233.6 H53.9 C56.9,233.6 58.6,235.3 58.6,238.3 V246.3 C58.6,249.8 57,251.6 54.2,252.4 H48 C45.2,251.6 43.6,249.8 43.6,246.3 V242.6" fill="none" stroke="#fff" stroke-width="1.9" />
<path d="M47.3,253.8 H55 L54,257.6 H48.3 Z" fill="#fff" />
<line x1="47" y1="255.6" x2="55.5" y2="255.6" stroke="#404040" stroke-width="0.9" />
<text x="63.7" y="249.0" font-size="14.53" fill="#fff" textLength="23.3" lengthAdjust="spacingAndGlyphs" stroke="#fff" stroke-width="0.15">LUZ</text>
<line x1="91.8" y1="236.8" x2="91.8" y2="251.8" stroke="#8f8f8f" stroke-width="1.4" />
<text x="96.3" y="243.4" font-size="7.56" fill="#a9a9a9" textLength="22.7" lengthAdjust="spacingAndGlyphs" >Planilhas</text>
<text x="96.3" y="249.8" font-size="7.56" fill="#a9a9a9" textLength="32.7" lengthAdjust="spacingAndGlyphs" >Empresariais</text>
<text x="177.0" y="250.4" font-size="12.50" font-weight="bold" fill="#fff" textLength="59.7" lengthAdjust="spacingAndGlyphs" >CADASTRO</text>
<text x="277.7" y="250.4" font-size="12.50" font-weight="bold" fill="#fff" textLength="113.4" lengthAdjust="spacingAndGlyphs" >COMPRAS E VENDAS</text>
<text x="427.5" y="250.4" font-size="12.50" font-weight="bold" fill="#fff" textLength="68.8" lengthAdjust="spacingAndGlyphs" >RELATÓRIOS</text>
<text x="532.5" y="250.4" font-size="12.50" font-weight="bold" fill="#fff" textLength="70.6" lengthAdjust="spacingAndGlyphs" >DASHBOARD</text>
<text x="637.9" y="250.4" font-size="12.50" font-weight="bold" fill="#fff" textLength="68.8" lengthAdjust="spacingAndGlyphs" >INSTRUÇÕES</text>
<text x="167.4" y="295.1" font-size="12.06" font-weight="bold" fill="#404040" textLength="73.3" lengthAdjust="spacingAndGlyphs" >PATRIMÔNIO</text>
<text x="311.7" y="295.1" font-size="12.06" font-weight="bold" fill="#fff" textLength="53.8" lengthAdjust="spacingAndGlyphs" >CARTEIRA</text>
<rect x="24" y="220" width="18" height="50" fill="#217346" />
<rect x="26" y="222" width="14" height="46" fill="#fff" />
<rect x="27" y="223" width="12" height="44" fill="#404040" />
<rect x="37" y="265" width="6" height="6" fill="#fff" />
<rect x="38" y="266" width="5" height="5" fill="#217346" />
<rect x="52" y="322" width="214" height="35" fill="#d9d9d9" />
<text x="165.0" y="342.8" font-size="11.34" font-weight="bold" fill="#595959" textLength="86.7" lengthAdjust="spacingAndGlyphs" >Selecione o Ano</text>
<rect x="282.5" y="322.5" width="152" height="34" fill="#fff" stroke="#7f8793" stroke-width="1.2" />
<rect x="401.5" y="323.2" width="32.5" height="32.6" fill="#e1e1e1" />
<line x1="401.5" y1="322.5" x2="401.5" y2="356.5" stroke="#a8a8a8" stroke-width="1" />
<path d="M409.5,336 H425 L417.25,344 Z" fill="#000" />
<text x="287.8" y="344.0" font-size="11.63" fill="#000" textLength="21.5" lengthAdjust="spacingAndGlyphs" >2018</text>
<line x1="50" y1="363.5" x2="1294" y2="363.5" stroke="#d9d9d9" stroke-width="1" />
<text x="54.5" y="385.8" font-size="15.84" font-weight="bold" fill="#000" textLength="121.9" lengthAdjust="spacingAndGlyphs" >Patrimônio Inicial</text>
<rect x="50.5" y="395.5" width="215" height="48" fill="#f2f2f2" stroke="#d9d9d9" stroke-width="1" />
<text x="93.9" y="430.3" font-size="29.94" font-weight="bold" fill="#57b13c" textLength="128.4" lengthAdjust="spacingAndGlyphs" >R$80.000</text>
<text x="54.5" y="471.3" font-size="15.84" font-weight="bold" fill="#000" textLength="150.3" lengthAdjust="spacingAndGlyphs" >Patrimônio Projetado</text>
<rect x="50.5" y="481.5" width="215" height="48" fill="#f2f2f2" stroke="#d9d9d9" stroke-width="1" />
<text x="86.2" y="516.5" font-size="29.94" font-weight="bold" fill="#57b13c" textLength="144.8" lengthAdjust="spacingAndGlyphs" >R$120.283</text>
<text x="54.5" y="557.3" font-size="15.84" font-weight="bold" fill="#000" textLength="111.3" lengthAdjust="spacingAndGlyphs" >Resultado Atual</text>
<rect x="50.5" y="567.5" width="215" height="48" fill="#f2f2f2" stroke="#d9d9d9" stroke-width="1" />
<text x="93.0" y="602.8" font-size="29.94" font-weight="bold" fill="#57b13c" textLength="129.5" lengthAdjust="spacingAndGlyphs" >R$30.094</text>
<text x="54.5" y="643.8" font-size="15.84" font-weight="bold" fill="#000" textLength="86.5" lengthAdjust="spacingAndGlyphs" >Resultado %</text>
<rect x="50.5" y="653.5" width="215" height="48" fill="#f2f2f2" stroke="#d9d9d9" stroke-width="1" />
<text x="129.5" y="688.7" font-size="29.94" font-weight="bold" fill="#57b13c" textLength="58.0" lengthAdjust="spacingAndGlyphs" >38%</text>
<text x="287.2" y="384.6" font-size="14.83" font-weight="bold" fill="#000" textLength="257.3" lengthAdjust="spacingAndGlyphs" >Evolução do Patrimônio - Acumulado</text>
<text x="287.1" y="553.0" font-size="14.83" font-weight="bold" fill="#000" textLength="180.6" lengthAdjust="spacingAndGlyphs" >Ganhos e Perdas Mensais</text>
<rect x="283.5" y="395.5" width="1009" height="132.5" fill="#fff" stroke="#d9d9d9" stroke-width="1" />
<rect x="298" y="411.8" width="977.5" height="91.7" fill="#f2f2f2" />
<line x1="298" y1="503.5" x2="1275.5" y2="503.5" stroke="#d9d9d9" stroke-width="1" />
<path d="M338.60,474.70 C352.18,468.94 392.93,447.82 420.10,440.15 C447.27,432.47 474.43,429.34 501.60,428.63 C528.77,427.92 555.93,434.69 583.10,435.90 C610.27,437.11 637.43,435.90 664.60,435.90 C691.77,435.90 718.93,435.90 746.10,435.90 C773.27,435.90 800.43,435.90 827.60,435.90 C854.77,435.90 881.93,435.90 909.10,435.90 C936.27,435.90 963.43,435.90 990.60,435.90 C1017.77,435.90 1044.93,435.90 1072.10,435.90 C1099.27,435.90 1126.43,435.90 1153.60,435.90 C1180.77,435.90 1221.52,435.90 1235.10,435.90" fill="none" stroke="#5b8fca" stroke-width="2.2" stroke-linecap="round"/>
<text x="317.0" y="464.3" font-size="10.17" fill="#404040" textLength="43.2" lengthAdjust="spacingAndGlyphs" >R$ 46.744</text>
<text x="322.6" y="520.0" font-size="10.17" fill="#595959" textLength="32.0" lengthAdjust="spacingAndGlyphs" >Janeiro</text>
<text x="395.8" y="429.7" font-size="10.17" fill="#404040" textLength="48.6" lengthAdjust="spacingAndGlyphs" >R$ 103.162</text>
<text x="399.5" y="520.0" font-size="10.17" fill="#595959" textLength="41.2" lengthAdjust="spacingAndGlyphs" >Fevereiro</text>
<text x="477.3" y="418.2" font-size="10.17" fill="#404040" textLength="48.6" lengthAdjust="spacingAndGlyphs" >R$ 121.961</text>
<text x="487.4" y="520.0" font-size="10.17" fill="#595959" textLength="28.5" lengthAdjust="spacingAndGlyphs" >Março</text>
<text x="558.8" y="425.5" font-size="10.17" fill="#404040" textLength="48.6" lengthAdjust="spacingAndGlyphs" >R$ 110.094</text>
<text x="573.1" y="520.0" font-size="10.17" fill="#595959" textLength="20.0" lengthAdjust="spacingAndGlyphs" >Abril</text>
<text x="640.3" y="425.5" font-size="10.17" fill="#404040" textLength="48.6" lengthAdjust="spacingAndGlyphs" >R$ 110.094</text>
<text x="653.6" y="520.0" font-size="10.17" fill="#595959" textLength="22.0" lengthAdjust="spacingAndGlyphs" >Maio</text>
<text x="721.8" y="425.5" font-size="10.17" fill="#404040" textLength="48.6" lengthAdjust="spacingAndGlyphs" >R$ 110.094</text>
<text x="733.1" y="520.0" font-size="10.17" fill="#595959" textLength="26.0" lengthAdjust="spacingAndGlyphs" >Junho</text>
<text x="803.3" y="425.5" font-size="10.17" fill="#404040" textLength="48.6" lengthAdjust="spacingAndGlyphs" >R$ 110.094</text>
<text x="815.6" y="520.0" font-size="10.17" fill="#595959" textLength="24.0" lengthAdjust="spacingAndGlyphs" >Julho</text>
<text x="884.8" y="425.5" font-size="10.17" fill="#404040" textLength="48.6" lengthAdjust="spacingAndGlyphs" >R$ 110.094</text>
<text x="893.1" y="520.0" font-size="10.17" fill="#595959" textLength="32.0" lengthAdjust="spacingAndGlyphs" >Agosto</text>
<text x="966.3" y="425.5" font-size="10.17" fill="#404040" textLength="48.6" lengthAdjust="spacingAndGlyphs" >R$ 110.094</text>
<text x="969.6" y="520.0" font-size="10.17" fill="#595959" textLength="42.0" lengthAdjust="spacingAndGlyphs" >Setembro</text>
<text x="1047.8" y="425.5" font-size="10.17" fill="#404040" textLength="48.6" lengthAdjust="spacingAndGlyphs" >R$ 110.094</text>
<text x="1053.1" y="520.0" font-size="10.17" fill="#595959" textLength="38.0" lengthAdjust="spacingAndGlyphs" >Outubro</text>
<text x="1129.3" y="425.5" font-size="10.17" fill="#404040" textLength="48.6" lengthAdjust="spacingAndGlyphs" >R$ 110.094</text>
<text x="1130.6" y="520.0" font-size="10.17" fill="#595959" textLength="46.0" lengthAdjust="spacingAndGlyphs" >Novembro</text>
<text x="1210.8" y="425.5" font-size="10.17" fill="#404040" textLength="48.6" lengthAdjust="spacingAndGlyphs" >R$ 110.094</text>
<text x="1212.3" y="520.0" font-size="10.17" fill="#595959" textLength="45.5" lengthAdjust="spacingAndGlyphs" >Dezembro</text>
<rect x="283.5" y="566.5" width="1007" height="135.5" fill="#fff" stroke="#d9d9d9" stroke-width="1" />
<rect x="297" y="582" width="982" height="107.5" fill="#f2f2f2" />
<line x1="297" y1="653.6" x2="1279" y2="653.6" stroke="#d9d9d9" stroke-width="1" />
<text x="321.5" y="671.2" font-size="10.17" fill="#595959" textLength="32.0" lengthAdjust="spacingAndGlyphs" >Janeiro</text>
<text x="398.7" y="671.2" font-size="10.17" fill="#595959" textLength="41.2" lengthAdjust="spacingAndGlyphs" >Fevereiro</text>
<text x="486.9" y="671.2" font-size="10.17" fill="#595959" textLength="28.5" lengthAdjust="spacingAndGlyphs" >Março</text>
<text x="573.0" y="671.2" font-size="10.17" fill="#595959" textLength="20.0" lengthAdjust="spacingAndGlyphs" >Abril</text>
<text x="653.9" y="671.2" font-size="10.17" fill="#595959" textLength="22.0" lengthAdjust="spacingAndGlyphs" >Maio</text>
<text x="733.7" y="671.2" font-size="10.17" fill="#595959" textLength="26.0" lengthAdjust="spacingAndGlyphs" >Junho</text>
<text x="816.5" y="671.2" font-size="10.17" fill="#595959" textLength="24.0" lengthAdjust="spacingAndGlyphs" >Julho</text>
<text x="894.4" y="671.2" font-size="10.17" fill="#595959" textLength="32.0" lengthAdjust="spacingAndGlyphs" >Agosto</text>
<text x="971.2" y="671.2" font-size="10.17" fill="#595959" textLength="42.0" lengthAdjust="spacingAndGlyphs" >Setembro</text>
<text x="1055.1" y="671.2" font-size="10.17" fill="#595959" textLength="38.0" lengthAdjust="spacingAndGlyphs" >Outubro</text>
<text x="1132.9" y="671.2" font-size="10.17" fill="#595959" textLength="46.0" lengthAdjust="spacingAndGlyphs" >Novembro</text>
<text x="1215.0" y="671.2" font-size="10.17" fill="#595959" textLength="45.5" lengthAdjust="spacingAndGlyphs" >Dezembro</text>
<path d="M337.50,683.90 C351.14,670.28 392.06,610.11 419.34,602.20 C446.62,594.30 473.90,626.11 501.18,636.47 C528.46,646.84 555.74,661.56 583.02,664.41 C610.30,667.26 637.58,655.40 664.86,653.60 C692.14,651.80 719.42,653.60 746.70,653.60 C773.98,653.60 801.26,653.60 828.54,653.60 C855.82,653.60 883.10,653.60 910.38,653.60 C937.66,653.60 964.94,653.60 992.22,653.60 C1019.50,653.60 1046.78,653.60 1074.06,653.60 C1101.34,653.60 1128.62,653.60 1155.90,653.60 C1183.18,653.60 1224.10,653.60 1237.74,653.60" fill="none" stroke="#ffc000" stroke-width="2.2" stroke-linecap="round"/>
<text x="313.8" y="671.5" font-size="10.17" fill="#404040" textLength="47.4" lengthAdjust="spacingAndGlyphs" >-R$ 33.256</text>
<text x="397.6" y="590.9" font-size="10.17" fill="#404040" textLength="43.5" lengthAdjust="spacingAndGlyphs" >R$ 56.418</text>
<text x="479.4" y="625.2" font-size="10.17" fill="#404040" textLength="43.5" lengthAdjust="spacingAndGlyphs" >R$ 18.799</text>
<text x="559.3" y="653.1" font-size="10.17" fill="#404040" textLength="47.4" lengthAdjust="spacingAndGlyphs" >-R$ 11.866</text>
<text x="655.4" y="642.3" font-size="10.17" fill="#404040" textLength="19.0" lengthAdjust="spacingAndGlyphs" >R$ 0</text>
<text x="737.2" y="642.3" font-size="10.17" fill="#404040" textLength="19.0" lengthAdjust="spacingAndGlyphs" >R$ 0</text>
<text x="819.0" y="642.3" font-size="10.17" fill="#404040" textLength="19.0" lengthAdjust="spacingAndGlyphs" >R$ 0</text>
<text x="900.9" y="642.3" font-size="10.17" fill="#404040" textLength="19.0" lengthAdjust="spacingAndGlyphs" >R$ 0</text>
<text x="982.7" y="642.3" font-size="10.17" fill="#404040" textLength="19.0" lengthAdjust="spacingAndGlyphs" >R$ 0</text>
<text x="1064.6" y="642.3" font-size="10.17" fill="#404040" textLength="19.0" lengthAdjust="spacingAndGlyphs" >R$ 0</text>
<text x="1146.4" y="642.3" font-size="10.17" fill="#404040" textLength="19.0" lengthAdjust="spacingAndGlyphs" >R$ 0</text>
<text x="1228.2" y="642.3" font-size="10.17" fill="#404040" textLength="19.0" lengthAdjust="spacingAndGlyphs" >R$ 0</text>
<rect x="1344.5" y="203" width="21.5" height="514" fill="#e6e6e6" />
<line x1="1344.5" y1="221" x2="1344.5" y2="717" stroke="#9b9b9b" stroke-width="1" />
<rect x="1348.5" y="205.5" width="14" height="15" fill="#fff" stroke="#ababab" stroke-width="1" />
<path d="M1351.5,215 L1355.5,211 L1359.5,215 Z" fill="#777" />
<rect x="1348.5" y="221" width="14" height="496" fill="#dadada" />
<rect x="1348.5" y="220.5" width="14" height="347" fill="#fff" stroke="#ababab" stroke-width="1" />
<rect x="1348.5" y="702.5" width="14" height="14" fill="#fff" stroke="#ababab" stroke-width="1" />
<path d="M1351.5,708 L1355.5,712 L1359.5,708 Z" fill="#777" />
<rect x="0" y="717" width="1366" height="28" fill="#e6e6e6" />
<line x1="0" y1="717.5" x2="451" y2="717.5" stroke="#a6a6a6" stroke-width="1" />
<line x1="513" y1="717.5" x2="1366" y2="717.5" stroke="#a6a6a6" stroke-width="1" />
<path d="M30.5,726 L26.5,730 L30.5,734 Z" fill="#c0c0c0" />
<path d="M56,726 L60,730 L56,734 Z" fill="#c0c0c0" />
<line x1="100.5" y1="721" x2="100.5" y2="741" stroke="#9b9b9b" stroke-width="1" />
<line x1="155.5" y1="721" x2="155.5" y2="741" stroke="#9b9b9b" stroke-width="1" />
<line x1="205.5" y1="721" x2="205.5" y2="741" stroke="#9b9b9b" stroke-width="1" />
<line x1="252.5" y1="721" x2="252.5" y2="741" stroke="#9b9b9b" stroke-width="1" />
<line x1="310.5" y1="721" x2="310.5" y2="741" stroke="#9b9b9b" stroke-width="1" />
<line x1="381.5" y1="721" x2="381.5" y2="741" stroke="#9b9b9b" stroke-width="1" />
<line x1="590.5" y1="721" x2="590.5" y2="741" stroke="#9b9b9b" stroke-width="1" />
<line x1="632.5" y1="721" x2="632.5" y2="741" stroke="#9b9b9b" stroke-width="1" />
<line x1="684.5" y1="721" x2="684.5" y2="741" stroke="#9b9b9b" stroke-width="1" />
<line x1="733.5" y1="721" x2="733.5" y2="741" stroke="#9b9b9b" stroke-width="1" />
<line x1="781.5" y1="721" x2="781.5" y2="741" stroke="#9b9b9b" stroke-width="1" />
<line x1="830.5" y1="721" x2="830.5" y2="741" stroke="#9b9b9b" stroke-width="1" />
<rect x="452" y="717" width="60" height="24" fill="#fff" />
<line x1="451.5" y1="717" x2="451.5" y2="742" stroke="#9b9b9b" stroke-width="1" />
<line x1="512.5" y1="717" x2="512.5" y2="742" stroke="#9b9b9b" stroke-width="1" />
<rect x="451" y="740" width="62" height="2" fill="#217346" />
<line x1="0" y1="745.5" x2="1366" y2="745.5" stroke="#c6c6c6" stroke-width="1" />
<text x="112.8" y="735.2" font-size="13.66" fill="#4a4a4a" textLength="28.6" lengthAdjust="spacingAndGlyphs" >geral</text>
<text x="166.0" y="735.2" font-size="13.66" fill="#4a4a4a" textLength="27.5" lengthAdjust="spacingAndGlyphs" >cmp</text>
<text x="217.5" y="735.2" font-size="13.66" fill="#4a4a4a" textLength="22.0" lengthAdjust="spacingAndGlyphs" >vnd</text>
<text x="263.5" y="735.2" font-size="13.66" fill="#4a4a4a" textLength="35.0" lengthAdjust="spacingAndGlyphs" >açoes</text>
<text x="323.0" y="735.2" font-size="13.66" fill="#4a4a4a" textLength="44.9" lengthAdjust="spacingAndGlyphs" >relgeral</text>
<text x="394.4" y="735.2" font-size="13.66" fill="#4a4a4a" textLength="43.3" lengthAdjust="spacingAndGlyphs" >carteira</text>
<text x="462.8" y="735.2" font-size="13.66" font-weight="bold" fill="#217346" textLength="37.0" lengthAdjust="spacingAndGlyphs" >dpatri</text>
<text x="525.3" y="735.2" font-size="13.66" fill="#4a4a4a" textLength="51.1" lengthAdjust="spacingAndGlyphs" >dcarteira</text>
<text x="603.5" y="735.2" font-size="13.66" fill="#4a4a4a" textLength="15.2" lengthAdjust="spacingAndGlyphs" >INI</text>
<text x="645.2" y="735.2" font-size="13.66" fill="#4a4a4a" textLength="25.5" lengthAdjust="spacingAndGlyphs" >DUV</text>
<text x="696.0" y="735.2" font-size="13.66" fill="#4a4a4a" textLength="24.6" lengthAdjust="spacingAndGlyphs" >SUG</text>
<text x="746.4" y="735.2" font-size="13.66" fill="#4a4a4a" textLength="21.1" lengthAdjust="spacingAndGlyphs" >LUZ</text>
<text x="794.0" y="735.2" font-size="13.66" fill="#4a4a4a" textLength="22.7" lengthAdjust="spacingAndGlyphs" >aux.</text>
<circle cx="871.7" cy="730.7" r="7.3" fill="none" stroke="#666" stroke-width="1.2"/>
<path d="M867.5,730.7 H875.9 M871.7,726.5 V734.9" fill="none" stroke="#666" stroke-width="1.6" />
<circle cx="1128" cy="726.5" r="0.9" fill="#9a9a9a"/>
<circle cx="1128" cy="731" r="0.9" fill="#9a9a9a"/>
<circle cx="1128" cy="735.5" r="0.9" fill="#9a9a9a"/>
<rect x="1144.5" y="724.5" width="14" height="14" fill="#fff" stroke="#ababab" stroke-width="1" />
<path d="M1153.5,727.5 L1149.5,731.5 L1153.5,735.5 Z" fill="#777" />
<rect x="1158.5" y="724.5" width="170" height="14" fill="#dadada" />
<rect x="1158.5" y="724.5" width="58" height="14" fill="#fff" stroke="#ababab" stroke-width="1" />
<rect x="1329.5" y="724.5" width="14" height="14" fill="#fff" stroke="#ababab" stroke-width="1" />
<path d="M1334.5,727.5 L1338.5,731.5 L1334.5,735.5 Z" fill="#777" />
<rect x="0" y="746" width="1366" height="22" fill="#f3f3f3" />
<text x="7.2" y="759.8" font-size="11.48" fill="#262626" textLength="33.8" lengthAdjust="spacingAndGlyphs" >Pronto</text>
<rect x="63.5" y="750.5" width="11" height="11" fill="none" stroke="#666" stroke-width="1" />
<rect x="69" y="750" width="6.5" height="2.2" fill="#666" />
<rect x="65.2" y="754.5" width="1.6" height="1" fill="#666" />
<rect x="67.7" y="754.5" width="1.6" height="1" fill="#666" />
<rect x="70.2" y="754.5" width="1.6" height="1" fill="#666" />
<rect x="72.7" y="754.5" width="1.6" height="1" fill="#666" />
<rect x="65.2" y="757.0" width="1.6" height="1" fill="#666" />
<rect x="67.7" y="757.0" width="1.6" height="1" fill="#666" />
<rect x="70.2" y="757.0" width="1.6" height="1" fill="#666" />
<rect x="72.7" y="757.0" width="1.6" height="1" fill="#666" />
<rect x="65.2" y="759.5" width="1.6" height="1" fill="#666" />
<rect x="67.7" y="759.5" width="1.6" height="1" fill="#666" />
<rect x="70.2" y="759.5" width="1.6" height="1" fill="#666" />
<rect x="72.7" y="759.5" width="1.6" height="1" fill="#666" />
<circle cx="65.3" cy="752.2" r="2.9" fill="#666"/>
<rect x="1086" y="746" width="38" height="20" fill="#c6c6c6" />
<rect x="1098.5" y="749.5" width="12.5" height="12.5" fill="none" stroke="#666" stroke-width="1.1" />
<line x1="1102.6666666666667" y1="749.5" x2="1102.6666666666667" y2="762" stroke="#666" stroke-width="1" />
<line x1="1098.5" y1="753.6666666666666" x2="1111" y2="753.6666666666666" stroke="#666" stroke-width="1" />
<line x1="1106.8333333333333" y1="749.5" x2="1106.8333333333333" y2="762" stroke="#666" stroke-width="1" />
<line x1="1098.5" y1="757.8333333333334" x2="1111" y2="757.8333333333334" stroke="#666" stroke-width="1" />
<rect x="1136.5" y="749.5" width="13" height="12.5" fill="none" stroke="#666" stroke-width="1.1" />
<rect x="1139.5" y="751.5" width="8" height="8" fill="none" stroke="#666" stroke-width="1" />
<line x1="1141" y1="753.5" x2="1146" y2="753.5" stroke="#666" stroke-width="1" />
<line x1="1141" y1="755.5" x2="1146" y2="755.5" stroke="#666" stroke-width="1" />
<line x1="1141" y1="757.5" x2="1146" y2="757.5" stroke="#666" stroke-width="1" />
<rect x="1174.5" y="749.5" width="13" height="12.5" fill="none" stroke="#666" stroke-width="1.1" />
<path d="M1174.5,755.5 H1183.5 V749.5 M1179.5,749.5 V755.5" fill="none" stroke="#666" stroke-width="1" />
<line x1="1205" y1="756" x2="1211" y2="756" stroke="#555" stroke-width="1.6" />
<line x1="1215" y1="756.5" x2="1314.5" y2="756.5" stroke="#a6a6a6" stroke-width="1" />
<line x1="1265" y1="753.5" x2="1265" y2="759.5" stroke="#a6a6a6" stroke-width="1" />
<rect x="1258.5" y="750" width="4.5" height="10.5" fill="#666" />
<path d="M1318,756 H1325.5 M1321.75,752.3 V759.7" fill="none" stroke="#555" stroke-width="1.6" />
<text x="1337.0" y="759.0" font-size="12.06" fill="#444" textLength="21.0" lengthAdjust="spacingAndGlyphs" >90%</text>
<rect x="0" y="766" width="1366" height="2" fill="#000" />
<rect x="48" y="766" width="344" height="2" fill="#c9c9c9" />
<rect x="542" y="766" width="48" height="2" fill="#3a3a3a" />
</svg></body></html>
